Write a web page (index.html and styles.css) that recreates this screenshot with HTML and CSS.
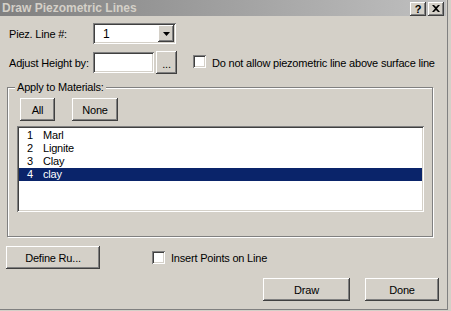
FILE: index.html
```html
<!DOCTYPE html>
<html>
    <head>
        <meta charset="utf-8">
        <title>Draw Piezometric Lines</title>
        <link rel="stylesheet" href="styles.css">
    </head>
    <body>
        <div class="window">
            <div class="titlebar">
                <span class="title">Draw Piezometric Lines</span>
                <div class="tbtns">
                    <span class="tbtn">?</span>
                    <span class="tbtn">
                        <svg width="8" height="7" viewBox="0 0 8 7"><path d="M0 0h2l2 2 2-2h2L5 3.5 8 7H6L4 5 2 7H0l3-3.5z" fill="#000"/></svg>
                    </span>
                </div>
            </div>
            <div class="client">
                <div class="row row1">
                    <span class="lbl">Piez. Line #:</span>
                    <div class="combo sunken">
                        <span class="combo-val">1</span>
                        <span class="dd raised">
                            <svg width="7" height="4" viewBox="0 0 7 4"><path d="M0 0h7L3.5 4z" fill="#000"/></svg>
                        </span>
                    </div>
                </div>
                <div class="row row2">
                    <span class="lbl">Adjust Height by:</span>
                    <div class="edit sunken"></div>
                    <span class="btn dots">...</span>
                    <span class="check sunken check1"></span>
                    <span class="chk-text">Do not allow piezometric line above surface line</span>
                </div>
                <div class="group">
                    <span class="legend">Apply to Materials:</span>
                    <div class="btnrow">
                        <span class="btn all">All</span>
                        <span class="btn none">None</span>
                    </div>
                    <div class="list sunken">
                        <div class="item"><span class="num">1</span><span>Marl</span></div>
                        <div class="item"><span class="num">2</span><span>Lignite</span></div>
                        <div class="item"><span class="num">3</span><span>Clay</span></div>
                        <div class="item sel"><span class="num">4</span><span>clay</span></div>
                    </div>
                </div>
                <div class="row row3">
                    <span class="btn define">Define Ru...</span>
                    <span class="check sunken check2"></span>
                    <span class="chk-text">Insert Points on Line</span>
                </div>
                <div class="row row4">
                    <span class="btn draw">Draw</span>
                    <span class="btn done">Done</span>
                </div>
            </div>
        </div>
    </body>
</html>
```

FILE: styles.css
```css
*{box-sizing:border-box;}
body,html{
    margin: 0;
    width:100%;
    height:100%;
    background-color: #d4d0c8;
    font-family: "Liberation Sans", Arial, sans-serif;
    font-size: 11px;
    letter-spacing: -0.2px;
    color: #000;
}
.window{width:448px; height:310px; border-right:1px solid #808080; border-bottom:1px solid #808080; overflow:hidden;}

/* title bar */
.titlebar{height:16px; display:flex; align-items:center; justify-content:space-between; background:linear-gradient(to right, #808080, #c0c0c0); margin-right:1px;}
.title{color:#d4d0c8; font-weight:bold; font-size:12px; padding-left:2px; letter-spacing:0;}
.tbtns{display:flex; gap:2px; margin-right:2px; padding-top:1px;}
.tbtn{width:16px; height:14px; background:#d4d0c8; display:flex; align-items:center; justify-content:center; font-weight:bold; font-size:11px;
    box-shadow: inset -1px -1px 0 #404040, inset 1px 1px 0 #fff, inset -2px -2px 0 #808080;}

/* 3d helpers */
.sunken{background:#fff; box-shadow: inset 1px 1px 0 #808080, inset -1px -1px 0 #fff, inset 2px 2px 0 #404040, inset -2px -2px 0 #d4d0c8;}
.raised, .btn{background:#d4d0c8; box-shadow: inset -1px -1px 0 #404040, inset 1px 1px 0 #fff, inset -2px -2px 0 #808080;}
.btn{display:flex; align-items:center; justify-content:center; height:23px;}

.row{display:flex; align-items:center;}
.lbl{width:84px; white-space:nowrap;}

.row1{margin-top:7px; padding-left:9px; height:21px;}
.combo{width:83px; height:21px; display:flex; align-items:center; justify-content:space-between; padding:2px;}
.combo-val{padding-left:8px; font-size:12px;}
.dd{width:16px; height:17px; display:flex; align-items:center; justify-content:center;}

.row2{margin-top:7px; padding-left:9px; height:23px;}
.edit{width:61px; height:21px;}
.dots{width:21px; margin-left:2px; padding-top:3px;}
.check{width:13px; height:13px; flex:none;}
.check1{margin-left:16px; margin-top:-2px;}
.chk-text{margin-left:6px; white-space:nowrap;}

/* group box */
.group{position:relative; margin:13px 0 0 7px; width:426px; height:150px; border:1px solid #808080;
    box-shadow: inset 1px 1px 0 #fff, 1px 1px 0 #fff; padding:10px 0 0 9px;}
.legend{position:absolute; top:-7px; left:7px; padding:0 2px 0 2px; background:#d4d0c8;}
.btnrow{display:flex; gap:17px; margin-left:3px;}
.all{width:35px;}
.none{width:46px;}
.list{margin-top:5px; width:407px; height:86px; padding:3px 0 0 2px;}
.item{display:flex; height:13px; line-height:13px;}
.num{padding-left:8px; width:24px;}
.sel{background:#0a246a; color:#fff; margin-right:2px;}

.row3{margin-top:9px; padding-left:6px;}
.define{width:94px;}
.check2{margin-left:52px;}
.chk-text{margin-left:6px;}

.row4{margin-top:9px; justify-content:flex-end; gap:15px; padding-right:8px;}
.draw{width:87px;}
.done{width:74px;}
```
